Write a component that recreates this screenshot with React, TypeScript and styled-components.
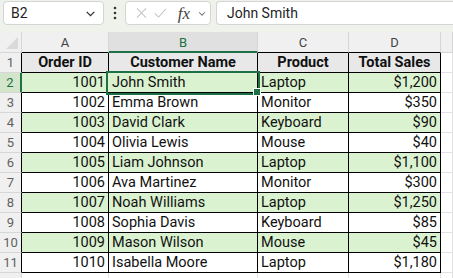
import React, { FC } from 'react';
import styled, { createGlobalStyle, css } from 'styled-components';

const GlobalStyle = createGlobalStyle`
  html, body {
    margin: 0;
    padding: 0;
    background: #ffffff;
  }
  body {
    font-family: Roboto, "Liberation Sans", sans-serif;
    overflow: hidden;
  }
`;

const GREEN = '#1e7145';
const BAND = '#daf2d0';
const GRID = '#e1e1e1';

const Shell = styled.div`
  width: 453px;
  height: 278px;
  overflow: hidden;
`;

const FormulaBar = styled.div`
  height: 32px;
  background: #eef2ea;
  display: flex;
  align-items: flex-start;
  padding: 1px 0 0 3px;
  box-sizing: border-box;
`;

const Box = styled.div`
  height: 24px;
  background: #ffffff;
  border: 1px solid #d4d4d4;
  border-radius: 4px;
  box-sizing: border-box;
  display: flex;
  align-items: center;
`;

const NameBox = styled(Box)`
  width: 101px;
  padding: 0 6px 0 7px;
  justify-content: space-between;
  font-size: 14px;
  color: #1f1f1f;
`;

const Dots = styled.div`
  width: 21px;
  height: 24px;
  display: flex;
  align-items: center;
  justify-content: center;
`;

const FxBox = styled(Box)`
  width: 86px;
  padding: 0 3px 0 10px;
  gap: 7px;
`;

const FxLabel = styled.span`
  font-family: "Liberation Serif", "DejaVu Serif", serif;
  font-style: italic;
  font-size: 17px;
  color: #444;
  margin-left: 4px;
  line-height: 1;
`;

const FormulaInput = styled(Box)`
  flex: 1;
  margin-left: 5px;
  border-right: none;
  border-radius: 4px 0 0 4px;
  padding-left: 10px;
  font-size: 14px;
  color: #1f1f1f;
`;

const Sheet = styled.div`
  display: grid;
  grid-template-columns: 22px 87px 149px 91px 92px 1fr;
  grid-auto-rows: 20px;
  grid-template-rows: 21px;
`;

const Corner = styled.div`
  background: #f0f0f0;
  border-right: 1px solid #d6d6d6;
  border-bottom: 1px solid #d6d6d6;
  box-sizing: border-box;
  position: relative;
  &::after {
    content: '';
    position: absolute;
    right: 3px;
    bottom: 3px;
    width: 0;
    height: 0;
    border-left: 12px solid transparent;
    border-bottom: 12px solid #d9d9d9;
  }
`;

const ColHead = styled.div<{ $active?: boolean; $edge?: boolean }>`
  background: ${({ $active }) => ($active ? '#e0e0e0' : '#f0f0f0')};
  color: ${({ $active }) => ($active ? GREEN : '#444')};
  font-size: 13px;
  display: flex;
  align-items: center;
  justify-content: center;
  box-sizing: border-box;
  border-right: 1px solid #d6d6d6;
  border-bottom: ${({ $active, $edge }) =>
    $active ? `2px solid ${GREEN}` : `1px solid ${$edge ? '#000' : '#d6d6d6'}`};
  padding-top: ${({ $active }) => ($active ? '1px' : '0')};
`;

const RowHead = styled.div<{ $active?: boolean; $edge?: boolean }>`
  background: ${({ $active }) => ($active ? '#d3e6cc' : '#f0f0f0')};
  color: ${({ $active }) => ($active ? GREEN : '#616161')};
  font-size: 13px;
  display: flex;
  align-items: center;
  justify-content: center;
  box-sizing: border-box;
  border-bottom: 1px solid #d6d6d6;
  border-right: ${({ $active, $edge }) =>
    $active ? `2px solid ${GREEN}` : `1px solid ${$edge ? '#000' : '#d6d6d6'}`};
`;

const Cell = styled.div<{
  $align?: 'left' | 'right' | 'center';
  $head?: boolean;
  $band?: boolean;
  $empty?: boolean;
  $selected?: boolean;
}>`
  position: relative;
  box-sizing: border-box;
  display: flex;
  align-items: center;
  justify-content: ${({ $align }) =>
    $align === 'right' ? 'flex-end' : $align === 'center' ? 'center' : 'flex-start'};
  padding: 0 3px;
  font-size: 14.5px;
  color: #111;
  white-space: nowrap;
  border-right: 1px solid ${({ $empty }) => ($empty ? GRID : '#000')};
  border-bottom: 1px solid ${({ $empty }) => ($empty ? GRID : '#000')};
  background: ${({ $head, $band }) => ($head ? '#e8e8e8' : $band ? BAND : '#fff')};
  font-weight: ${({ $head }) => ($head ? 700 : 400)};
  ${({ $selected }) =>
    $selected &&
    css`
      z-index: 2;
      box-shadow: 0 0 0 2px ${GREEN};
      margin-left: -1px;
      padding-left: 4px;
    `}
`;

const FillHandle = styled.span`
  position: absolute;
  right: -4px;
  bottom: -4px;
  width: 6px;
  height: 6px;
  background: ${GREEN};
  border: 1px solid #fff;
`;

const Chevron: FC<{ size?: number; color?: string }> = ({ size = 12, color = '#444' }) => (
  <svg width={size} height={size} viewBox="0 0 12 12">
    <path d="M2.5 4.5 L6 8 L9.5 4.5" fill="none" stroke={color} strokeWidth="1.2" />
  </svg>
);

type Row = { id: number; name: string; product: string; sales: string };

const rows: Row[] = [
  { id: 1001, name: 'John Smith', product: 'Laptop', sales: '$1,200' },
  { id: 1002, name: 'Emma Brown', product: 'Monitor', sales: '$350' },
  { id: 1003, name: 'David Clark', product: 'Keyboard', sales: '$90' },
  { id: 1004, name: 'Olivia Lewis', product: 'Mouse', sales: '$40' },
  { id: 1005, name: 'Liam Johnson', product: 'Laptop', sales: '$1,100' },
  { id: 1006, name: 'Ava Martinez', product: 'Monitor', sales: '$300' },
  { id: 1007, name: 'Noah Williams', product: 'Laptop', sales: '$1,250' },
  { id: 1008, name: 'Sophia Davis', product: 'Keyboard', sales: '$85' },
  { id: 1009, name: 'Mason Wilson', product: 'Mouse', sales: '$45' },
  { id: 1010, name: 'Isabella Moore', product: 'Laptop', sales: '$1,180' },
];

const App: FC = () => (
  <Shell>
    <GlobalStyle />
    <FormulaBar>
      <NameBox>
        <span>B2</span>
        <Chevron size={13} color="#333" />
      </NameBox>
      <Dots>
        <svg width="4" height="14" viewBox="0 0 4 14">
          <circle cx="2" cy="2" r="1.3" fill="#333" />
          <circle cx="2" cy="7" r="1.3" fill="#333" />
          <circle cx="2" cy="12" r="1.3" fill="#333" />
        </svg>
      </Dots>
      <FxBox>
        <svg width="12" height="12" viewBox="0 0 12 12">
          <path d="M1 1 L11 11 M11 1 L1 11" stroke="#c4c4c4" strokeWidth="1.1" />
        </svg>
        <svg width="14" height="12" viewBox="0 0 14 12">
          <path d="M1 6.5 L5 10.5 L13 1.5" fill="none" stroke="#c4c4c4" strokeWidth="1.1" />
        </svg>
        <FxLabel>fx</FxLabel>
        <Chevron size={11} color="#777" />
      </FxBox>
      <FormulaInput>John Smith</FormulaInput>
    </FormulaBar>

    <Sheet>
      <Corner />
      <ColHead $edge>A</ColHead>
      <ColHead $active>B</ColHead>
      <ColHead $edge>C</ColHead>
      <ColHead $edge>D</ColHead>
      <ColHead />

      <RowHead $edge>1</RowHead>
      <Cell $head $align="center">Order ID</Cell>
      <Cell $head $align="center">Customer Name</Cell>
      <Cell $head $align="center">Product</Cell>
      <Cell $head $align="center">Total Sales</Cell>
      <Cell $empty />

      {rows.map((r, i) => {
        const n = i + 2;
        const band = n % 2 === 0;
        const selected = n === 2;
        return (
          <React.Fragment key={r.id}>
            <RowHead $edge $active={selected}>{n}</RowHead>
            <Cell $band={band} $align="right">{r.id}</Cell>
            <Cell $band={band} $selected={selected}>
              {r.name}
              {selected && <FillHandle />}
            </Cell>
            <Cell $band={band}>{r.product}</Cell>
            <Cell $band={band} $align="right">{r.sales}</Cell>
            <Cell $empty />
          </React.Fragment>
        );
      })}

      <RowHead />
      <Cell $empty />
      <Cell $empty />
      <Cell $empty />
      <Cell $empty />
      <Cell $empty />
    </Sheet>
  </Shell>
);

export default App;
